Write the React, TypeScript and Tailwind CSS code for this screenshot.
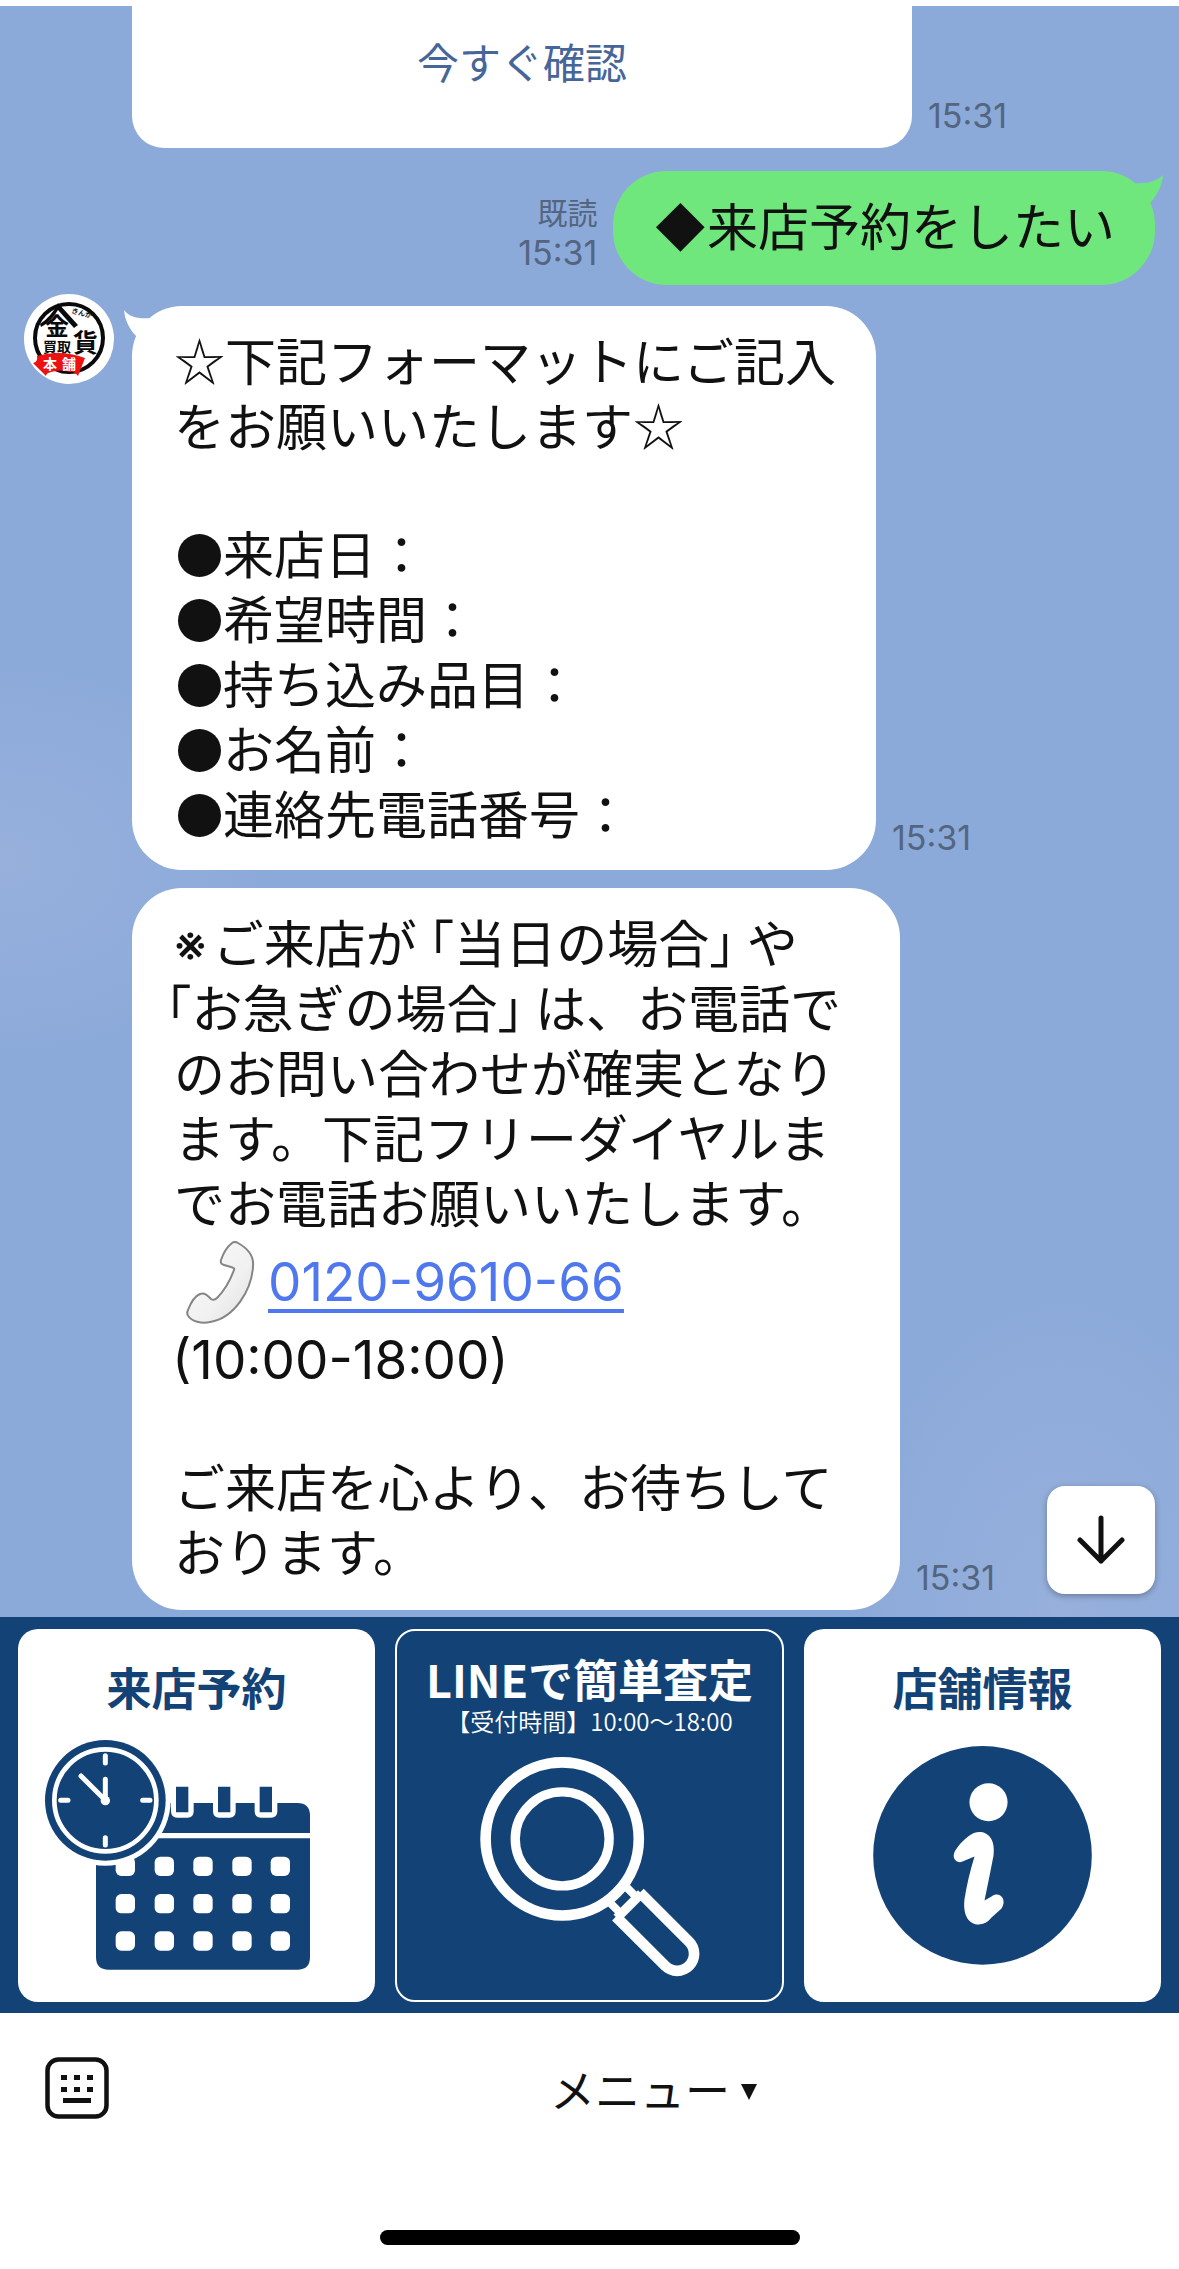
import type { ReactNode } from 'react'
import { clsx } from 'clsx'

const FORM_FIELDS = ['来店日：', '希望時間：', '持ち込み品目：', 'お名前：', '連絡先電話番号：']

const CALENDAR_COLUMNS = [347, 464, 580, 697, 812]
const CALENDAR_ROWS = [773, 885, 997]

function Time() {
  return <time className="block text-[34px] leading-10 text-[#53657f]">15:31</time>
}

// Square brackets are set half width, with the leftover space outside
function Open({ start = false }: { start?: boolean }) {
  return <span className={clsx('[font-feature-settings:"halt"]', !start && 'pl-3')}>「</span>
}

function Close() {
  return <span className='pr-3 [font-feature-settings:"halt"]'>」</span>
}

// Inter has its own small star, so the Japanese font is named here
function Star() {
  return <span className="font-['Noto_Sans_CJK_JP',sans-serif] leading-none">☆</span>
}

function Avatar() {
  return (
    <svg viewBox="0 0 90 90" className="size-[90px] shrink-0" role="img" aria-label="金貨買取本舗">
      <circle cx="45" cy="45" r="45" fill="#fff" />
      <circle cx="45" cy="44" r="34" fill="none" stroke="#0a0a0a" strokeWidth="4" />
      <g fill="#0a0a0a" className="font-['Noto_Sans_CJK_JP',sans-serif] font-bold">
        <path d="M34 9 44 20 54 31 50 34 34 16Q27 28 17 33L16 30Q27 23 34 9Z" />
        <text x="21" y="41" fontSize="24">金</text>
        <text x="49" y="58" fontSize="25">貨</text>
        <text x="19" y="58" fontSize="14">買取</text>
        <text x="47" y="19" fontSize="7" transform="rotate(14 47 19)">きんか</text>
      </g>
      <path d="M13 62Q36 55 61 64L54 82Q50 77 46 78Q36 75 27 78Q22 79 22 82L9 69Q14 68 13 62Z" fill="#ee1111" />
      <g fill="#fff" className="font-['Noto_Sans_CJK_JP',sans-serif] font-bold">
        <text x="19" y="75" fontSize="14">本</text>
        <text x="38" y="75" fontSize="14">舗</text>
      </g>
    </svg>
  )
}

function PhoneEmoji() {
  return (
    <svg viewBox="0 0 70 84" className="mr-3 ml-3 h-[84px] w-[70px]" aria-hidden="true">
      <defs>
        <linearGradient id="handset" x1="0" y1="0" x2="1" y2="1">
          <stop offset="0" stopColor="#fafafa" />
          <stop offset="0.6" stopColor="#f1f1f1" />
          <stop offset="1" stopColor="#dedede" />
        </linearGradient>
      </defs>
      <path
        d="M46 2Q49 0 52 2C61 7 68 15 67 25C66 48 49 77 24 81C15 83 6 80 3 76Q0 73 2 69C5 61 9 55 14 53C19 51 22 55 25 58Q28 60 31 57C38 50 44 40 48 29Q49 27 45 26L38 24Q34 23 35 19C37 13 41 6 46 2Z"
        fill="url(#handset)"
        stroke="#858585"
        strokeWidth="2"
      />
    </svg>
  )
}

function CalendarArt() {
  return (
    <svg viewBox="54 354 1071 810" className="w-full" aria-hidden="true">
      <path d="M288 702V650Q288 612 326 612H892Q930 612 930 650V702ZM288 718H930V1074Q930 1112 892 1112H326Q288 1112 288 1074Z" fill="#134376" />
      {[528, 654, 779].map(x => (
        <g key={x}>
          <path d={`M${x - 15} 550H${x + 53}V637Q${x + 53} 656 ${x + 34} 656H${x + 4}Q${x - 15} 656 ${x - 15} 637Z`} fill="#fff" />
          <path d={`M${x} 563H${x + 37}V640H${x}Z`} fill="#134376" />
        </g>
      ))}
      {CALENDAR_ROWS.map(y =>
        CALENDAR_COLUMNS.map(x => <rect key={`${x}-${y}`} x={x} y={y} width="58" height="58" rx="17" fill="#fff" />)
      )}
      <circle cx="316" cy="604" r="196" fill="#fff" />
      <circle cx="316" cy="604" r="181" fill="#134376" />
      <circle cx="316" cy="604" r="153" fill="none" stroke="#fff" strokeWidth="14" />
      <path d="M316 470V492M316 716V738M182 604H204M428 604H450M316 541V604L243 531" fill="none" stroke="#fff" strokeWidth="15" strokeLinecap="round" strokeLinejoin="round" />
      <circle cx="316" cy="605" r="14" fill="#fff" />
    </svg>
  )
}

function MagnifierArt() {
  return (
    <svg viewBox="50 400 1156 740" className="w-full" aria-hidden="true">
      <g fill="none" stroke="#fff">
        <circle cx="546" cy="718" r="230" strokeWidth="32" />
        <circle cx="546" cy="718" r="141" strokeWidth="28" />
        <g transform="translate(546 718) rotate(45)">
          <path d="M238 -34H288M238 34H288" strokeWidth="24" />
          <path d="M284 -52V52" strokeWidth="28" />
          <path d="M279 -51H488A51 51 0 0 1 488 51H279" strokeWidth="32" />
        </g>
      </g>
    </svg>
  )
}

function InfoArt() {
  return (
    <svg viewBox="804 1718 356 270" className="w-full" aria-hidden="true">
      <circle cx="982" cy="1856" r="109" fill="#134376" />
      <circle cx="988" cy="1803" r="19" fill="#fff" />
      <path
        d="M962 1862L974 1857Q967 1880 964 1900C961 1928 982 1930 991 1918L1001 1909C1007 1900 999 1891 991 1897L984 1901Q989 1877 993 1856C996 1833 979 1828 968 1837Q960 1843 955 1851C950 1859 957 1865 962 1862Z"
        fill="#fff"
      />
    </svg>
  )
}

interface MenuCardProps {
  title: string
  note?: string
  outlined?: boolean
  children: ReactNode
}

function MenuCard({ title, note, outlined, children }: MenuCardProps) {
  return (
    <button
      className={clsx(
        'flex h-[373px] flex-col items-center overflow-hidden rounded-[20px]',
        outlined ? 'border-2 border-white pt-[18px] text-white' : 'bg-white pt-7 text-[#134376]'
      )}
    >
      <span className="text-[45px] leading-[60px] font-bold">{title}</span>
      {note && <span className="text-2xl leading-6 font-[350]">{note}</span>}
      {children}
    </button>
  )
}

export default function App() {
  return (
    <div className="flex min-h-screen flex-col bg-white font-[Inter,'Noto_Sans_CJK_JP',sans-serif] text-[#111]" lang="ja">
      <main className="relative flex flex-col border-t-6 border-white bg-[#8caad9] bg-[radial-gradient(ellipse_at_0%_53%,#97b0dc_0%,transparent_16%),radial-gradient(ellipse_at_90%_100%,#97b0dc_0%,transparent_14%)] pb-[7px]">
        {/* Tail of the previous card message */}
        <div className="flex items-end gap-4 pl-[132px]">
          <div className="w-[780px] rounded-b-[32px] bg-white pt-7 pb-[54px] text-center">
            <a href="#confirm" className="text-[42px] leading-[60px] text-[#46669a]">今すぐ確認</a>
          </div>
          <div className="pb-3"><Time /></div>
        </div>

        {/* Sent message */}
        <div className="mt-[23px] flex items-end justify-end gap-4 pr-6">
          <div className="pb-3 text-right text-[30px] leading-10 text-[#53657f]">
            既読
            <Time />
          </div>
          <div className="relative rounded-[54px] bg-[#70e77d] py-6 pr-10 pl-10 text-[51px] leading-[66px]">
            <svg viewBox="0 0 40 44" className="absolute top-1 -right-2 h-11 w-10" aria-hidden="true">
              <path d="M40 0C34 6 24 9 14 8L4 20L22 36L28 27C35 19 39 10 40 0Z" fill="#70e77d" />
            </svg>
            ◆来店予約をしたい
          </div>
        </div>

        {/* Form request */}
        <div className="mt-[9px] flex gap-[18px] pl-6">
          <Avatar />
          <div className="mt-3 flex items-end gap-4">
            <div className="relative w-[744px] rounded-[50px] bg-white pt-6 pb-[22px] pl-[42px] text-[51px] leading-[65px]">
              <svg viewBox="0 0 44 40" className="absolute top-1 -left-2 h-10 w-11" aria-hidden="true">
                <path d="M0 0C5 7 14 9 26 8L40 24L30 36L13 27C6 20 1 11 0 0Z" fill="#fff" />
              </svg>
              <p><Star />下記フォーマットにご記入</p>
              <p>をお願いいたします<Star /></p>
              <ul className="mt-[63px]">
                {FORM_FIELDS.map(field => (
                  <li key={field} className="flex">
                    <span className="my-auto mr-0.5 ml-1 size-[43px] rounded-full bg-[#111]" />
                    {field}
                  </li>
                ))}
              </ul>
            </div>
            <div className="pb-3"><Time /></div>
          </div>
        </div>

        {/* Phone notice */}
        <div className="mt-[18px] flex items-end gap-4 pl-[132px]">
          <div className="w-[768px] rounded-[50px] bg-white pt-6 pb-6 pl-[42px] text-[51px] leading-[65px]">
            <p><span className="pr-1.5">※</span>ご来店が<Open />当日の場合<Close />や</p>
            <p className="-ml-2"><Open start />お急ぎの場合<Close />は、お電話で</p>
            <p>のお問い合わせが確実となり</p>
            <p>ます。下記フリーダイヤルま</p>
            <p>でお電話お願いいたします。</p>
            <p className="flex h-[91px] items-center text-[53px]">
              <PhoneEmoji />
              <a href="tel:0120961066" className="text-[#5078ee] underline decoration-4 underline-offset-8">0120-9610-66</a>
            </p>
            <p className="-ml-0.5 text-[53px]">(10:00-18:00)</p>
            <p className="mt-[63px]">ご来店を心より、お待ちして</p>
            <p>おります。</p>
          </div>
          <div className="pb-3"><Time /></div>
        </div>

        <button
          aria-label="最新のメッセージへ"
          className="absolute right-6 bottom-[23px] flex size-[108px] items-center justify-center rounded-[18px] bg-white shadow-[0_2px_6px_rgba(0,0,0,0.3)]"
        >
          <svg viewBox="0 0 48 50" className="h-[50px] w-12" aria-hidden="true">
            <path d="M24 3V46M3 25L24 46L45 25" fill="none" stroke="#111" strokeWidth="5" strokeLinecap="round" strokeLinejoin="round" />
          </svg>
        </button>
      </main>

      {/* Rich menu */}
      <nav className="grid grid-cols-[357fr_389fr_357fr] gap-5 bg-[#134376] px-[18px] pt-3 pb-[11px] font-['Noto_Sans_CJK_JP',sans-serif]">
        <MenuCard title="来店予約"><CalendarArt /></MenuCard>
        <MenuCard title="LINEで簡単査定" note="【受付時間】10:00～18:00" outlined><MagnifierArt /></MenuCard>
        <MenuCard title="店舗情報"><InfoArt /></MenuCard>
      </nav>

      <footer className="flex flex-1 flex-col">
        <div className="flex items-start pt-11 pl-[45px]">
          <button aria-label="キーボード">
            <svg viewBox="0 0 64 62" className="h-[62px] w-16" aria-hidden="true">
              <rect x="2.5" y="2.5" width="59" height="57" rx="11" fill="none" stroke="#111" strokeWidth="4.5" />
              <path d="M16 18h6v5h-6zM29 18h6v5h-6zM42 18h6v5h-6zM16 30h6v5h-6zM29 30h6v5h-6zM42 30h6v5h-6zM18 41h28v5H18z" fill="#111" />
            </svg>
          </button>
          <button className="mt-1 ml-5 flex flex-1 items-center justify-center gap-2.5 text-[45px] leading-[62px]">
            メニュー
            <svg viewBox="0 0 18 16" className="h-4 w-[18px]" aria-hidden="true">
              <path d="M1 0H17L9 16Z" fill="#111" />
            </svg>
          </button>
        </div>
        <div className="mx-auto mt-auto mb-6 h-[15px] w-[420px] rounded-full bg-black" />
      </footer>
    </div>
  )
}
